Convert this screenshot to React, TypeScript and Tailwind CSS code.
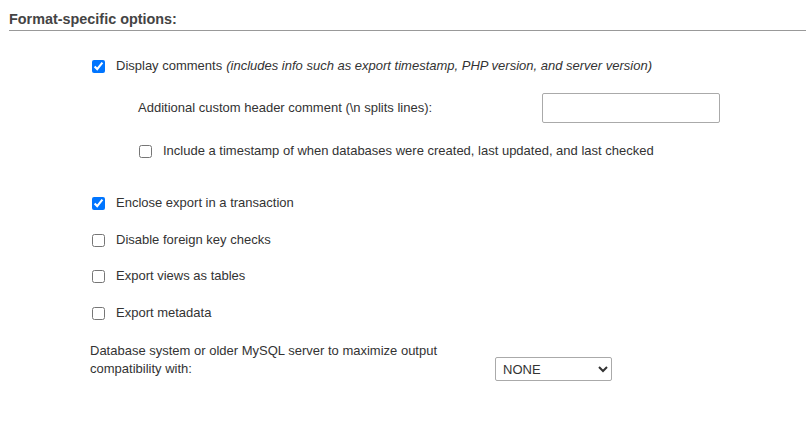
import { useState } from "react";

const font = { fontFamily: '"Liberation Sans", Arial, sans-serif' };

function Check({
  label,
  note,
  defaultChecked = false,
  className = "",
}: {
  label: string;
  note?: string;
  defaultChecked?: boolean;
  className?: string;
}) {
  const [checked, setChecked] = useState(defaultChecked);
  return (
    <label className={`flex h-[20px] items-center gap-[11px] ${className}`}>
      <input
        type="checkbox"
        checked={checked}
        onChange={(e) => setChecked(e.target.checked)}
        className="m-0 h-[13px] w-[13px]"
      />
      <span>
        {label}
        {note && <i className="ml-1">{note}</i>}
      </span>
    </label>
  );
}

export default function App() {
  const [header, setHeader] = useState("");
  const [compat, setCompat] = useState("NONE");

  return (
    <div className="h-[422px] w-[806px] bg-white text-[13px] leading-[20px] text-[#333]" style={font}>
      <div className="pl-[9px] pt-[11px]">
        <h3 className="border-b border-[#999] pb-[3px] text-[14.4px] leading-[16px] font-bold text-[#444]">
          Format-specific options:
        </h3>
      </div>

      <div className="pl-[92px]">
        <Check
          className="mt-[25px]"
          label="Display comments"
          note="(includes info such as export timestamp, PHP version, and server version)"
          defaultChecked
        />

        <div className="mt-[17px] flex h-[30px] items-center pl-[46px]">
          <span className="w-[404px]">Additional custom header comment (\n splits lines):</span>
          <input
            type="text"
            value={header}
            onChange={(e) => setHeader(e.target.value)}
            className="h-[30px] w-[178px] rounded-[2px] border border-[#aaa] px-1"
          />
        </div>

        <Check
          className="mt-[18px] pl-[47px]"
          label="Include a timestamp of when databases were created, last updated, and last checked"
        />

        <Check className="mt-[32px]" label="Enclose export in a transaction" defaultChecked />
        <Check className="mt-[17px]" label="Disable foreign key checks" />
        <Check className="mt-[16px]" label="Export views as tables" />
        <Check className="mt-[17px]" label="Export metadata" />

        <div className="mt-[19px] flex items-start">
          <p className="-ml-[2px] w-[405px] leading-[18px]">
            Database system or older MySQL server to maximize output
            <br />
            compatibility with:
          </p>
          <select
            value={compat}
            onChange={(e) => setCompat(e.target.value)}
            className="mt-[15px] h-[24px] w-[117px] rounded-[2px] border border-[#aaa] bg-white pl-[3px] text-[13px] text-[#333]"
          >
            <option>NONE</option>
            <option>ANSI</option>
            <option>DB2</option>
            <option>MAXDB</option>
            <option>MYSQL323</option>
            <option>MYSQL40</option>
            <option>MSSQL</option>
            <option>ORACLE</option>
            <option>TRADITIONAL</option>
          </select>
        </div>
      </div>
    </div>
  );
}
